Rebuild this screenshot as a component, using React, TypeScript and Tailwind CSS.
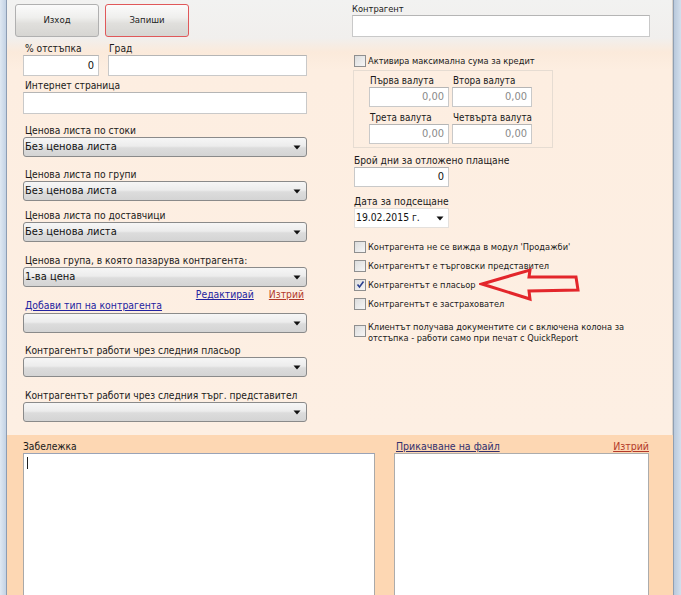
import React from "react";

const font = { fontFamily: '"DejaVu Sans Condensed", "DejaVu Sans", sans-serif' };

function Arrow() {
  return (
    <svg width="8" height="5" viewBox="0 0 8 5" className="shrink-0">
      <path d="M0.5 0.5 L7.5 0.5 L4 4.5 Z" fill="#111" />
    </svg>
  );
}

function Select({ value = "" }: { value?: string }) {
  return (
    <div className="h-[20px] w-full flex items-center justify-between rounded-[3px] border border-[#8a8a8a] bg-[linear-gradient(to_bottom,#f6f6f6_0%,#ececec_45%,#dcdcdc_55%,#d4d4d4_100%)] pl-[1px] pr-[5px] text-[11px] leading-[14px] text-[#111]">
      <span>{value}</span>
      <Arrow />
    </div>
  );
}

function Input({ value = "", h = "h-[21px]", w = "w-full", gray = false }: { value?: string; h?: string; w?: string; gray?: boolean }) {
  return (
    <div className={`${h} ${w} flex items-center justify-end border border-[#c9c9c9] border-t-[#b5b5b5] bg-white pr-[4px] text-[11px] leading-[14px] ${gray ? "text-[#8a8a8a]" : "text-[#111]"}`}>
      {value}
    </div>
  );
}

function Label({ children, cls = "" }: { children: React.ReactNode; cls?: string }) {
  return <div className={`h-[14px] pt-[1px] text-[10.2px] leading-[13px] text-[#1a1a1a] whitespace-nowrap ${cls}`}>{children}</div>;
}

function Check({ checked = false }: { checked?: boolean }) {
  return (
    <div className="w-[12px] h-[12px] shrink-0 border border-[#8f8f8f] bg-[linear-gradient(to_bottom_right,#dcdcdc,#f6f6f6)] flex items-center justify-center">
      {checked && (
        <svg width="9" height="9" viewBox="0 0 9 9">
          <path d="M1.5 4.5 L3.5 7 L7.5 1.5" stroke="#2a3f8f" strokeWidth="1.6" fill="none" />
        </svg>
      )}
    </div>
  );
}

function CheckRow({ label, checked = false }: { label: string; checked?: boolean }) {
  return (
    <div className="h-[19px] flex items-center gap-[2px] ml-[2px]">
      <Check checked={checked} />
      <span className="text-[9.2px] leading-[12px] text-[#1a1a1a] whitespace-nowrap">{label}</span>
    </div>
  );
}

function Button({ children, red = false }: { children: React.ReactNode; red?: boolean }) {
  return (
    <div
      className={`w-[84px] h-[33px] flex items-center justify-center rounded-[3px] border ${
        red ? "border-[#e0585a]" : "border-[#b0b0b0]"
      } bg-[linear-gradient(to_bottom,#fbfbfb_0%,#efefed_40%,#e0dfdc_60%,#d6d5d2_100%)] text-[9.5px] text-[#222]`}
    >
      {children}
    </div>
  );
}

export default function App() {
  return (
    <div className="w-[681px] h-[595px] flex overflow-hidden bg-[#fdeee1]" style={font}>
      {/* left window frame */}
      <div className="w-[7px] h-full bg-[linear-gradient(to_right,#dfe8f2,#c3d2e4)] border-r border-[#8d9db3] shrink-0" />

      {/* main */}
      <div className="w-[666px] h-full flex flex-col shrink-0">
        {/* upper panel */}
        <div className="h-[435px] flex shrink-0 bg-[linear-gradient(to_bottom,#f2f2f1_0px,#f1efed_38px,#fbeadb_52px,#fdeee1_70px,#fdefe3_100%)] border-r border-[#d8d2cc]">
          {/* left column */}
          <div className="w-[300px] pl-[16px] pt-[4px] flex flex-col shrink-0">
            <div className="-ml-[8px] flex gap-[6px]">
              <Button>Изход</Button>
              <Button red>Запиши</Button>
            </div>
            <div className="mt-[4px] flex gap-[9px]">
              <div className="w-[76px]">
                <Label cls="pl-[2px]">% отстъпка</Label>
                <Input value="0" />
              </div>
              <div className="flex-1">
                <Label cls="pl-[1px]">Град</Label>
                <Input />
              </div>
            </div>
            <div className="mt-[2px]">
              <Label cls="pl-[2px]">Интернет страница</Label>
              <Input h="h-[22px]" />
            </div>
            <div className="mt-[9px]">
              <Label cls="pl-[2px]">Ценова листа по стоки</Label>
              <Select value="Без ценова листа" />
            </div>
            <div className="mt-[10px]">
              <Label cls="pl-[2px]">Ценова листа по групи</Label>
              <Select value="Без ценова листа" />
            </div>
            <div className="mt-[7px]">
              <Label cls="pl-[2px]">Ценова листа по доставчици</Label>
              <Select value="Без ценова листа" />
            </div>
            <div className="mt-[11px]">
              <Label cls="pl-[2px]">Ценова група, в която пазарува контрагента:</Label>
              <Select value="1-ва цена" />
            </div>
            <div className="h-[14px] pt-[1px] flex justify-end gap-[15px] pr-[3px] text-[10.3px] leading-[13px]">
              <span className="underline text-[#2323a0]">Редактирай</span>
              <span className="underline text-[#b33a2a]">Изтрий</span>
            </div>
            <div className="-mt-[2px] h-[12px] pl-[2px] text-[10.4px] leading-[12px] underline text-[#2323a0] whitespace-nowrap">
              Добави тип на контрагента
            </div>
            <div className="mt-[2px]">
              <Select />
            </div>
            <div className="mt-[10px]">
              <Label cls="pl-[2px]">Контрагентът работи чрез следния пласьор</Label>
              <Select />
            </div>
            <div className="mt-[11px]">
              <Label cls="pl-[2px]">Контрагентът работи чрез следния търг. представител</Label>
              <Select />
            </div>
          </div>

          {/* right column */}
          <div className="ml-[45px] w-[298px] pt-[1px] flex flex-col shrink-0 relative">
            <div className="h-[14px] pt-[1px] text-[9.3px] leading-[13px] text-[#1a1a1a]">Контрагент</div>
            <Input h="h-[22px]" />
            <div className="mt-[17px] h-[14px] flex items-center gap-[2px] ml-[2px]">
              <Check />
              <span className="text-[9.2px] leading-[12px] text-[#1a1a1a] whitespace-nowrap">Активира максимална сума за кредит</span>
            </div>
            <div className="mt-[2px] ml-[1px] w-[200px] border border-[#e6dcd2] pl-[15px] pt-[2px] pb-[3px]">
              <div className="flex gap-[3px]">
                <div className="w-[80px]">
                  <div className="h-[14px] pt-[1px] pl-[1px] text-[9.8px] leading-[13px] text-[#1a1a1a] whitespace-nowrap">Първа валута</div>
                  <Input h="h-[20px]" value="0,00" gray />
                </div>
                <div className="w-[80px]">
                  <div className="h-[14px] pt-[1px] pl-[1px] text-[9.8px] leading-[13px] text-[#1a1a1a] whitespace-nowrap">Втора валута</div>
                  <Input h="h-[20px]" value="0,00" gray />
                </div>
              </div>
              <div className="flex gap-[3px] mt-[3px]">
                <div className="w-[80px]">
                  <div className="h-[14px] pt-[1px] pl-[1px] text-[9.8px] leading-[13px] text-[#1a1a1a] whitespace-nowrap">Трета валута</div>
                  <Input h="h-[20px]" value="0,00" gray />
                </div>
                <div className="w-[80px]">
                  <div className="h-[14px] pt-[1px] pl-[1px] text-[9.8px] leading-[13px] text-[#1a1a1a] whitespace-nowrap">Четвърта валута</div>
                  <Input h="h-[20px]" value="0,00" gray />
                </div>
              </div>
            </div>
            <div className="mt-[5px] ml-[2px]">
              <Label>Брой дни за отложено плащане</Label>
              <Input h="h-[20px]" w="w-[95px]" value="0" />
            </div>
            <div className="mt-[7px] ml-[2px]">
              <Label>Дата за подсещане</Label>
              <div className="h-[20px] w-[95px] flex items-center justify-between bg-white border border-[#e4e0dc] pl-[1px] pr-[4px] text-[10.3px] text-[#111]">
                <span>19.02.2015 г.</span>
                <Arrow />
              </div>
            </div>
            <div className="mt-[9px]">
              <CheckRow label={"Контрагента не се вижда в модул 'Продажби'"} />
              <CheckRow label="Контрагентът е търговски представител" />
              <CheckRow label="Контрагентът е пласьор" checked />
              <CheckRow label="Контрагентът е застраховател" />
            </div>
            <div className="mt-[8px] ml-[2px] flex gap-[2px]">
              <div className="mt-[4px]">
                <Check />
              </div>
              <div className="text-[9.2px] leading-[11px] text-[#1a1a1a] whitespace-nowrap">
                Клиентът получава документите си с включена колона за
                <br />
                отстъпка - работи само при печат с QuickReport
              </div>
            </div>

            {/* red arrow annotation */}
            <svg
              className="absolute left-[127px] top-[266px]"
              width="104"
              height="36"
              viewBox="0 0 104 36"
            >
              <path
                d="M3 18 L51 4 L50 11 L97 11 L99 24 L50 25 L51 33 Z"
                fill="none"
                stroke="#e3262b"
                strokeWidth="3"
                strokeLinejoin="miter"
              />
            </svg>
          </div>
        </div>

        {/* lower panel */}
        <div className="flex-1 bg-[#fdd7b3] flex pl-[16px] pt-[5px]">
          <div className="w-[352px] flex flex-col">
            <div className="h-[13px] text-[10.2px] leading-[13px] text-[#1a1a1a]">Забележка</div>
            <div className="flex-1 bg-white border border-[#a9a9a9] border-t-[#9aa3b6] border-b-0 pl-[3px] pt-[3px]">
              <div className="w-[1px] h-[12px] bg-[#222]" />
            </div>
          </div>
          <div className="ml-[19px] w-[255px] flex flex-col">
            <div className="h-[13px] flex justify-between text-[10.5px] leading-[13px]">
              <span className="underline text-[#33306e] pl-[2px]">Прикачване на файл</span>
              <span className="underline text-[#b33a2a]">Изтрий</span>
            </div>
            <div className="flex-1 bg-white border border-[#acacac] border-b-0" />
          </div>
        </div>
      </div>

      {/* right window frame */}
      <div className="w-[8px] h-full bg-[linear-gradient(to_right,#b9c9dc,#d3dfec)] border-l border-[#909fb2] shrink-0" />
    </div>
  );
}
